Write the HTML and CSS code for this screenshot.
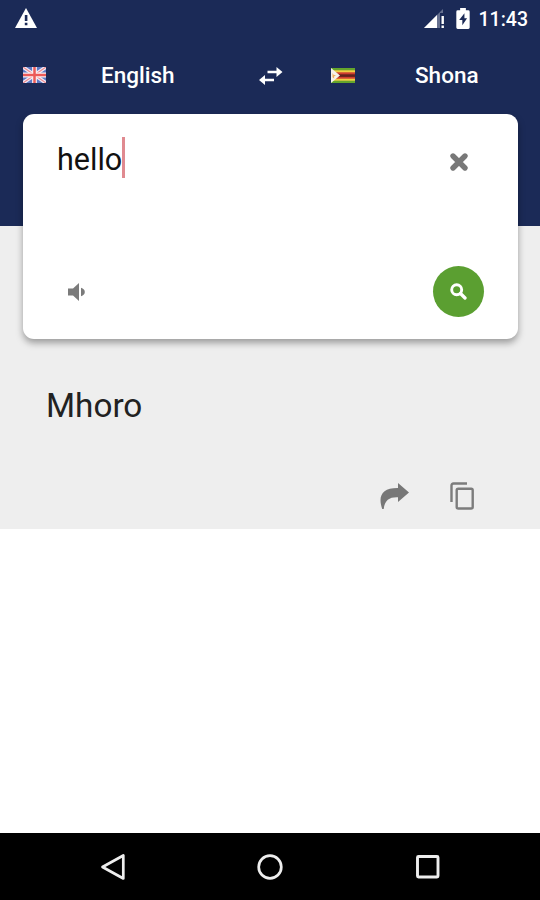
FILE: index.html
```html
<!DOCTYPE html>
<html lang="en">
<head>
  <meta charset="UTF-8">
  <title>English - Shona Translator</title>
  <meta name="viewport" content="width=device-width, initial-scale=1.0">
  <link rel="stylesheet" href="styles.css">
</head>
<body>

  <!-- Status bar -->
  <div class="status-bar">
    <svg class="icon-warning" width="22" height="20" viewBox="0 0 22 20">
      <path d="M11 0L22 20H0z" fill="#fff"/>
      <path d="M9.8 7h2.6v6H9.8zM9.8 14.8h2.6v2.4H9.8z" fill="#1b2a57"/>
    </svg>
    <div class="status-right">
      <svg class="icon-signal" width="21" height="20" viewBox="0 0 21 20">
        <path d="M0 19L19 0v4h-3v15z" fill="#66708f"/>
        <path d="M0 19L13 6v13z" fill="#fff"/>
        <path d="M17.5 7h2.4v8h-2.4zM17.5 16.6h2.4V19h-2.4z" fill="#fff"/>
      </svg>
      <svg class="icon-battery" width="14" height="21" viewBox="0 0 14 22">
        <path d="M4 0h6v2.300h2.500Q14 2.300 14 3.800v16.700q0 1.500-1.500 1.500h-11Q0 22 0 20.500V3.800q0-1.500 1.500-1.500H4z" fill="#fff"/>
        <path d="M8.500 5.500L3 12.700h3.300v5.300l5-7.300H8.500z" fill="#1b2a57"/>
      </svg>
      <span class="clock">11:43</span>
    </div>
  </div>

  <!-- Languages -->
  <header class="lang-bar">
    <div class="lang">
      <svg class="flag" width="23" height="16" viewBox="0 0 24 16" preserveAspectRatio="none">
        <path d="M0 0h24v16H0z" fill="#5d78c4"/>
        <path d="M0 0l24 16M24 0L0 16" stroke="#f3eef5" stroke-width="3.600"/>
        <path d="M0 0l24 16M24 0L0 16" stroke="#ef8a92" stroke-width="1.200"/>
        <path d="M12 0v16M0 8h24" stroke="#fbeff0" stroke-width="5"/>
        <path d="M12 0v16M0 8h24" stroke="#ec5a58" stroke-width="2.600"/>
      </svg>
      <span class="lang-name">English</span>
    </div>
    <svg class="icon-swap" width="24" height="18" viewBox="0 0 24 18">
      <path d="M8.500 3.700H17.500V0L23.500 5l-6 5V6.300H8.500zM15 11.700H6V8L0 13l6 5v-3.700H15z" fill="#fff"/>
    </svg>
    <div class="lang lang-to">
      <svg class="flag" width="24" height="15" viewBox="0 0 24 15">
        <path d="M0 0h24v15H0z" fill="#65a52b"/>
        <path d="M0 2.300h24v10.400H0z" fill="#f2cf45"/>
        <path d="M0 4.300h24v6.400H0z" fill="#cf3c30"/>
        <path d="M0 6.300h24v2.600H0z" fill="#61221d"/>
        <path d="M0 0l9 7.500L0 15z" fill="#f7f2ec"/>
        <path d="M1.500 5l1 1.700 2.500.6-2 1.200.2 2-1.700-1.200z" fill="#edb060"/>
      </svg>
      <span class="lang-name">Shona</span>
    </div>
  </header>

  <!-- Input card -->
  <main class="input-area">
    <div class="card">
      <div class="card-row card-top">
        <div class="query">hello<span class="caret"></span></div>
        <svg class="icon-clear" width="20" height="20" viewBox="0 0 20 20">
          <path d="M4 4l12 12M16 4L4 16" stroke="#787878" stroke-width="5.400" stroke-linecap="round"/>
        </svg>
      </div>
      <div class="card-row card-bottom">
        <svg class="icon-speaker" width="18" height="18" viewBox="0 0 18 18">
          <path d="M0 5.500h5L11 0v18l-6-5.500H0zM13 4.700q3.800 1.200 3.800 4.300T13 13.300z" fill="#7b7b7b"/>
        </svg>
        <button class="search-btn" aria-label="Search">
          <svg width="17" height="17" viewBox="0 0 17 17">
            <circle cx="6.700" cy="6.700" r="5" fill="none" stroke="#fff" stroke-width="2.900"/>
            <path d="M10.500 10.500l4.500 4.500" stroke="#fff" stroke-width="3.300" stroke-linecap="round"/>
          </svg>
        </button>
      </div>
    </div>
  </main>

  <!-- Translation -->
  <section class="result">
    <div class="translation">Mhoro</div>
    <div class="actions">
      <svg class="icon-share" width="29" height="26" viewBox="0 0 29 26">
        <path d="M18 0l11 9.500L18 19v-4.800C10 13.800 4.800 16.500 3.700 26H2.200C-2.300 13 2 4.800 18 5z" fill="#777"/>
      </svg>
      <svg class="icon-copy" width="24" height="28" viewBox="0 0 24 28">
        <path d="M1.500 20V3.500q0-2 2-2H17" fill="none" stroke="#7c7c7c" stroke-width="2.400"/>
        <rect x="6.700" y="6.700" width="16" height="19.800" rx="1.500" fill="none" stroke="#7c7c7c" stroke-width="2.400"/>
      </svg>
    </div>
  </section>

  <!-- Navigation bar -->
  <nav class="nav-bar">
    <svg width="28" height="28" viewBox="0 0 28 28">
      <path d="M24.300 2.500v23L3.500 14z" fill="none" stroke="#eee" stroke-width="2.700" stroke-linejoin="round"/>
    </svg>
    <svg width="28" height="28" viewBox="0 0 28 28">
      <circle cx="14" cy="14" r="11.300" fill="none" stroke="#eee" stroke-width="2.700"/>
    </svg>
    <svg width="28" height="28" viewBox="0 0 28 28">
      <rect x="4.500" y="3.500" width="20.500" height="20.500" rx="1" fill="none" stroke="#eee" stroke-width="2.900"/>
    </svg>
  </nav>

</body>
</html>
```

FILE: styles.css
```css
* {
  margin: 0;
  padding: 0;
  box-sizing: border-box;
}

body {
  font-family: Roboto, sans-serif;
  background-color: #fff;
  display: flex;
  flex-direction: column;
  height: 100vh;
  overflow: hidden;
}

svg {
  display: block;
  flex-shrink: 0;
}

/* Status bar */
.status-bar {
  height: 38px;
  background-color: #1b2a57;
  color: #fff;
  display: flex;
  justify-content: space-between;
  align-items: center;
  padding: 0 12px 0 15px;
}

.icon-warning {
  margin-bottom: 3px;
}

.status-right {
  display: flex;
  align-items: center;
}

.icon-signal {
  margin-bottom: 1px;
}

.icon-battery {
  margin: 0 9px 2px 11px;
}

.clock {
  font-size: 19.5px;
  font-weight: 500;
}

/* Languages */
.lang-bar {
  height: 76px;
  background-color: #1b2a57;
  color: #fff;
  display: grid;
  grid-template-columns: 236px 24px 1fr;
  padding-left: 23px;
}

.lang {
  display: flex;
  align-items: center;
  height: 74px;
}

.lang-to {
  padding-left: 48px;
}

.lang-name {
  font-size: 22.5px;
  font-weight: 500;
  margin-left: 55px;
}

.lang-to .lang-name {
  margin-left: 60px;
}

.icon-swap {
  align-self: center;
}

/* Input card */
.input-area {
  position: relative;
  z-index: 1;
  padding: 0 22px 0 23px;
  background: linear-gradient(#1b2a57 112.5px, #eee 112.5px);
}

.card {
  height: 225px;
  background-color: #fff;
  border-radius: 11px;
  box-shadow: 0 4px 7px rgba(0, 0, 0, 0.35);
  padding: 23px 34px 22px;
  display: flex;
  flex-direction: column;
  justify-content: space-between;
}

.card-row {
  display: flex;
  justify-content: space-between;
  align-items: center;
}

.card-top {
  padding-right: 15px;
}

.icon-clear {
  margin-top: 9px;
}

.query {
  display: flex;
  align-items: flex-start;
  height: 41px;
  font-size: 30.5px;
  line-height: 45px;
  color: #111;
}

.caret {
  width: 3px;
  height: 41px;
  background-color: #e08a90;
}

.icon-speaker {
  margin-left: 11px;
}

.search-btn {
  width: 51px;
  height: 51px;
  border: none;
  border-radius: 50%;
  background-color: #5b9f31;
  display: flex;
  justify-content: center;
  align-items: center;
}

/* Translation */
.result {
  height: 190px;
  background-color: #eee;
  padding: 47px 66px 0 46px;
}

.translation {
  font-size: 33.3px;
  line-height: 40px;
  color: #222;
}

.actions {
  display: flex;
  justify-content: flex-end;
  align-items: center;
  gap: 41px;
  margin-top: 56px;
}

/* Navigation bar */
.nav-bar {
  height: 67px;
  margin-top: auto;
  background-color: #000;
  display: flex;
  justify-content: space-between;
  align-items: center;
  padding: 0 99px;
}
```
